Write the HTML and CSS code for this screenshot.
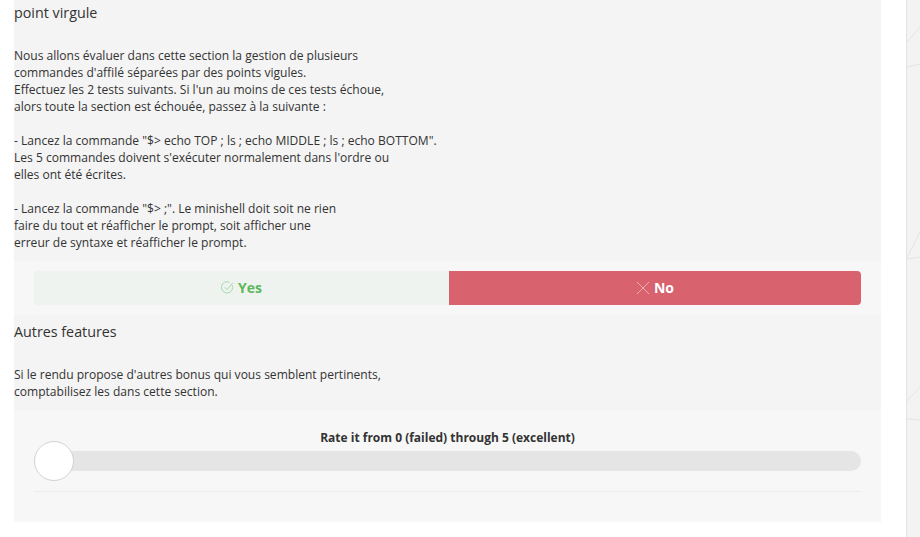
FILE: index.html
```html
<!DOCTYPE html>
<html lang="fr">
<head>
<meta charset="utf-8">
<link rel="stylesheet" href="styles.css">
</head>
<body>
<div class="page">
  <main class="panel">
    <section class="section">
      <h2 class="title">point virgule</h2>
      <p class="desc">Nous allons évaluer dans cette section la gestion de plusieurs
commandes d'affilé séparées par des points vigules.
Effectuez les 2 tests suivants. Si l'un au moins de ces tests échoue,
alors toute la section est échouée, passez à la suivante :

- Lancez la commande "$&gt; echo TOP ; ls ; echo MIDDLE ; ls ; echo BOTTOM".
Les 5 commandes doivent s'exécuter normalement dans l'ordre ou
elles ont été écrites.

- Lancez la commande "$&gt; ;". Le minishell doit soit ne rien
faire du tout et réafficher le prompt, soit afficher une
erreur de syntaxe et réafficher le prompt.</p>
    </section>
    <div class="choices">
      <button class="choice yes">
        <svg class="ico" width="13" height="13" viewBox="0 0 13 13"><path d="M11.2 4.2A5.6 5.6 0 1 1 8.6 1.4" fill="none" stroke="#9ed6a6" stroke-width="0.9"/><path d="M3.6 6.2l2.4 2.4 6-7" fill="none" stroke="#9ed6a6" stroke-width="0.9"/></svg>
        <span>Yes</span>
      </button>
      <button class="choice no">
        <svg class="ico" width="14" height="14" viewBox="0 0 14 14"><path d="M1 1L13 13M13 1L1 13" stroke="#f2a9b0" stroke-width="1"/></svg>
        <span>No</span>
      </button>
    </div>
    <section class="section">
      <h2 class="title">Autres features</h2>
      <p class="desc">Si le rendu propose d'autres bonus qui vous semblent pertinents,
comptabilisez les dans cette section.</p>
    </section>
    <div class="rating">
      <div class="rating-label">Rate it from 0 (failed) through 5 (excellent)</div>
      <div class="track">
        <span class="thumb"></span>
      </div>
      <div class="rule"></div>
    </div>
  </main>
  <div class="gutter"></div>
  <aside class="side">
    <svg class="side-lines" width="14" height="537" viewBox="0 0 14 537">
      <path d="M0 42L14 26M0 67L14 64M0 258L14 230M0 259L14 257M0 401L14 386M0 419L14 420" stroke="#e4e4e4" stroke-width="1" fill="none"/>
    </svg>
  </aside>
</div>
</body>
</html>
```

FILE: styles.css
```css
* { box-sizing: border-box; }
html, body {
  margin: 0;
  padding: 0;
  background: #ffffff;
  overflow: hidden;
}
body {
  font-family: "Open Sans", "Noto Sans", sans-serif;
  color: #333333;
  width: 920px;
  height: 537px;
}
.page {
  display: flex;
  height: 537px;
  padding-left: 14px;
}
.panel {
  flex: 0 0 867px;
  width: 867px;
  margin-top: -4.5px;
  align-self: flex-start;
  display: flex;
  flex-direction: column;
}
.section {
  background: #f4f4f4;
  padding: 6px 0 10px;
}
.title {
  margin: 0;
  font-size: 14.3px;
  line-height: 22px;
  font-weight: 400;
  color: #333;
}
.desc {
  margin: 23px 0 0;
  font-size: 12.05px;
  line-height: 17px;
  white-space: pre-line;
  color: #333;
}
.choices {
  background: #f7f7f7;
  padding: 10px 20px;
  display: flex;
}
.choice {
  flex: 1;
  height: 34px;
  border: 0;
  margin: 0;
  font-family: "Open Sans", "Noto Sans", sans-serif;
  font-size: 14px;
  font-weight: 700;
  display: flex;
  align-items: center;
  justify-content: center;
  gap: 4px;
  padding: 0;
}
.choice span { line-height: 20px; padding-top: 1px; }
.yes {
  background: #eef3ef;
  color: #5cb85c;
  border-radius: 3px 0 0 3px;
}
.no {
  background: #d9626f;
  color: #ffffff;
  border-radius: 0 4px 4px 0;
  flex: 0 0 412px;
}
.ico { display: block; }
.rating {
  background: #f7f7f7;
  padding: 19px 20px 30px;
}
.rating-label {
  text-align: center;
  font-size: 12px;
  line-height: 17px;
  font-weight: 700;
  color: #333;
}
.track {
  position: relative;
  margin-top: 5px;
  height: 20px;
  border-radius: 10px;
  background: #e5e5e5;
}
.thumb {
  position: absolute;
  left: 0;
  top: -10px;
  width: 40px;
  height: 40px;
  border-radius: 50%;
  background: #ffffff;
  border: 1px solid #cfd4d4;
}
.rule {
  margin-top: 20px;
  height: 1px;
  background: #ececec;
}
.gutter {
  flex: 0 0 25px;
  background: #ffffff;
}
.side {
  flex: 1;
  border-left: 1px solid #e3e3e3;
  background: #f3f3f3;
}
.side-lines { display: block; }
```
